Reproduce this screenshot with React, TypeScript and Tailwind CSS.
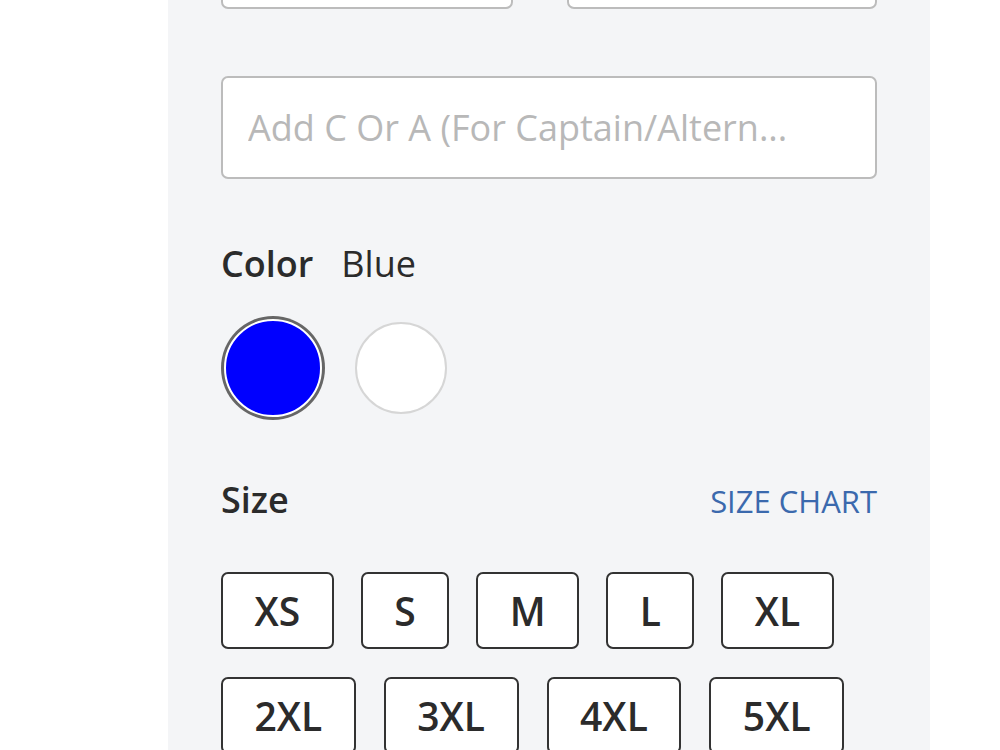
import React from "react";

const sizesRow1 = ["XS", "S", "M", "L", "XL"];
const sizesRow2 = ["2XL", "3XL", "4XL", "5XL"];

function SizeButton({ label }: { label: string }) {
  return (
    <button
      type="button"
      className="h-[77px] px-[31.5px] border-2 border-[#333333] rounded-[7px] bg-white text-[#2b2b2b] text-[39px] font-semibold leading-none"
    >
      {label}
    </button>
  );
}

export default function App() {
  return (
    <div
      className="h-[750px] overflow-hidden bg-white"
      style={{ fontFamily: '"Open Sans", "Noto Sans", sans-serif' }}
    >
      <div className="ml-[168px] w-[762px] min-h-[750px] bg-[#f4f5f7] px-[53px] pb-[40px]">
        <div className="-mt-[51px] flex gap-[54px]">
          <div className="w-[292px] h-[60px] bg-white border-2 border-[#bcbcbc] rounded-[7px]" />
          <div className="flex-1 h-[60px] bg-white border-2 border-[#bcbcbc] rounded-[7px]" />
        </div>

        <input
          className="block mt-[67px] h-[103px] w-full bg-white border-2 border-[#bcbcbc] rounded-[7px] px-[25px] text-[36px] text-[#333] placeholder:text-[#b8b8b8] outline-none"
          placeholder="Add C Or A (For Captain/Altern..."
        />

        <div className="mt-[63px] flex items-baseline gap-[28px] h-[44px] leading-[44px] text-[36px] text-[#2b2b2b]">
          <span className="font-semibold">Color</span>
          <span>Blue</span>
        </div>

        <div className="mt-[30px] flex items-center gap-[33px] h-[104px]">
          <button
            type="button"
            aria-label="Blue"
            className="ml-[3px] w-[98px] h-[98px] rounded-full bg-[#0000ff] border-2 border-white shadow-[0_0_0_3px_#666666]"
          />
          <button
            type="button"
            aria-label="White"
            className="w-[92px] h-[92px] rounded-full bg-white border-2 border-[#d6d6d6]"
          />
        </div>

        <div className="mt-[58px] flex items-baseline justify-between h-[44px] leading-[44px]">
          <span className="text-[36px] font-semibold text-[#2b2b2b]">Size</span>
          <a href="#" className="text-[31px] text-[#3b69ad]">
            SIZE CHART
          </a>
        </div>

        <div className="mt-[50px] flex flex-col gap-[28px]">
          <div className="flex gap-[27px]">
            {sizesRow1.map((s) => (
              <SizeButton key={s} label={s} />
            ))}
          </div>
          <div className="flex gap-[28px]">
            {sizesRow2.map((s) => (
              <SizeButton key={s} label={s} />
            ))}
          </div>
        </div>
      </div>
    </div>
  );
}
